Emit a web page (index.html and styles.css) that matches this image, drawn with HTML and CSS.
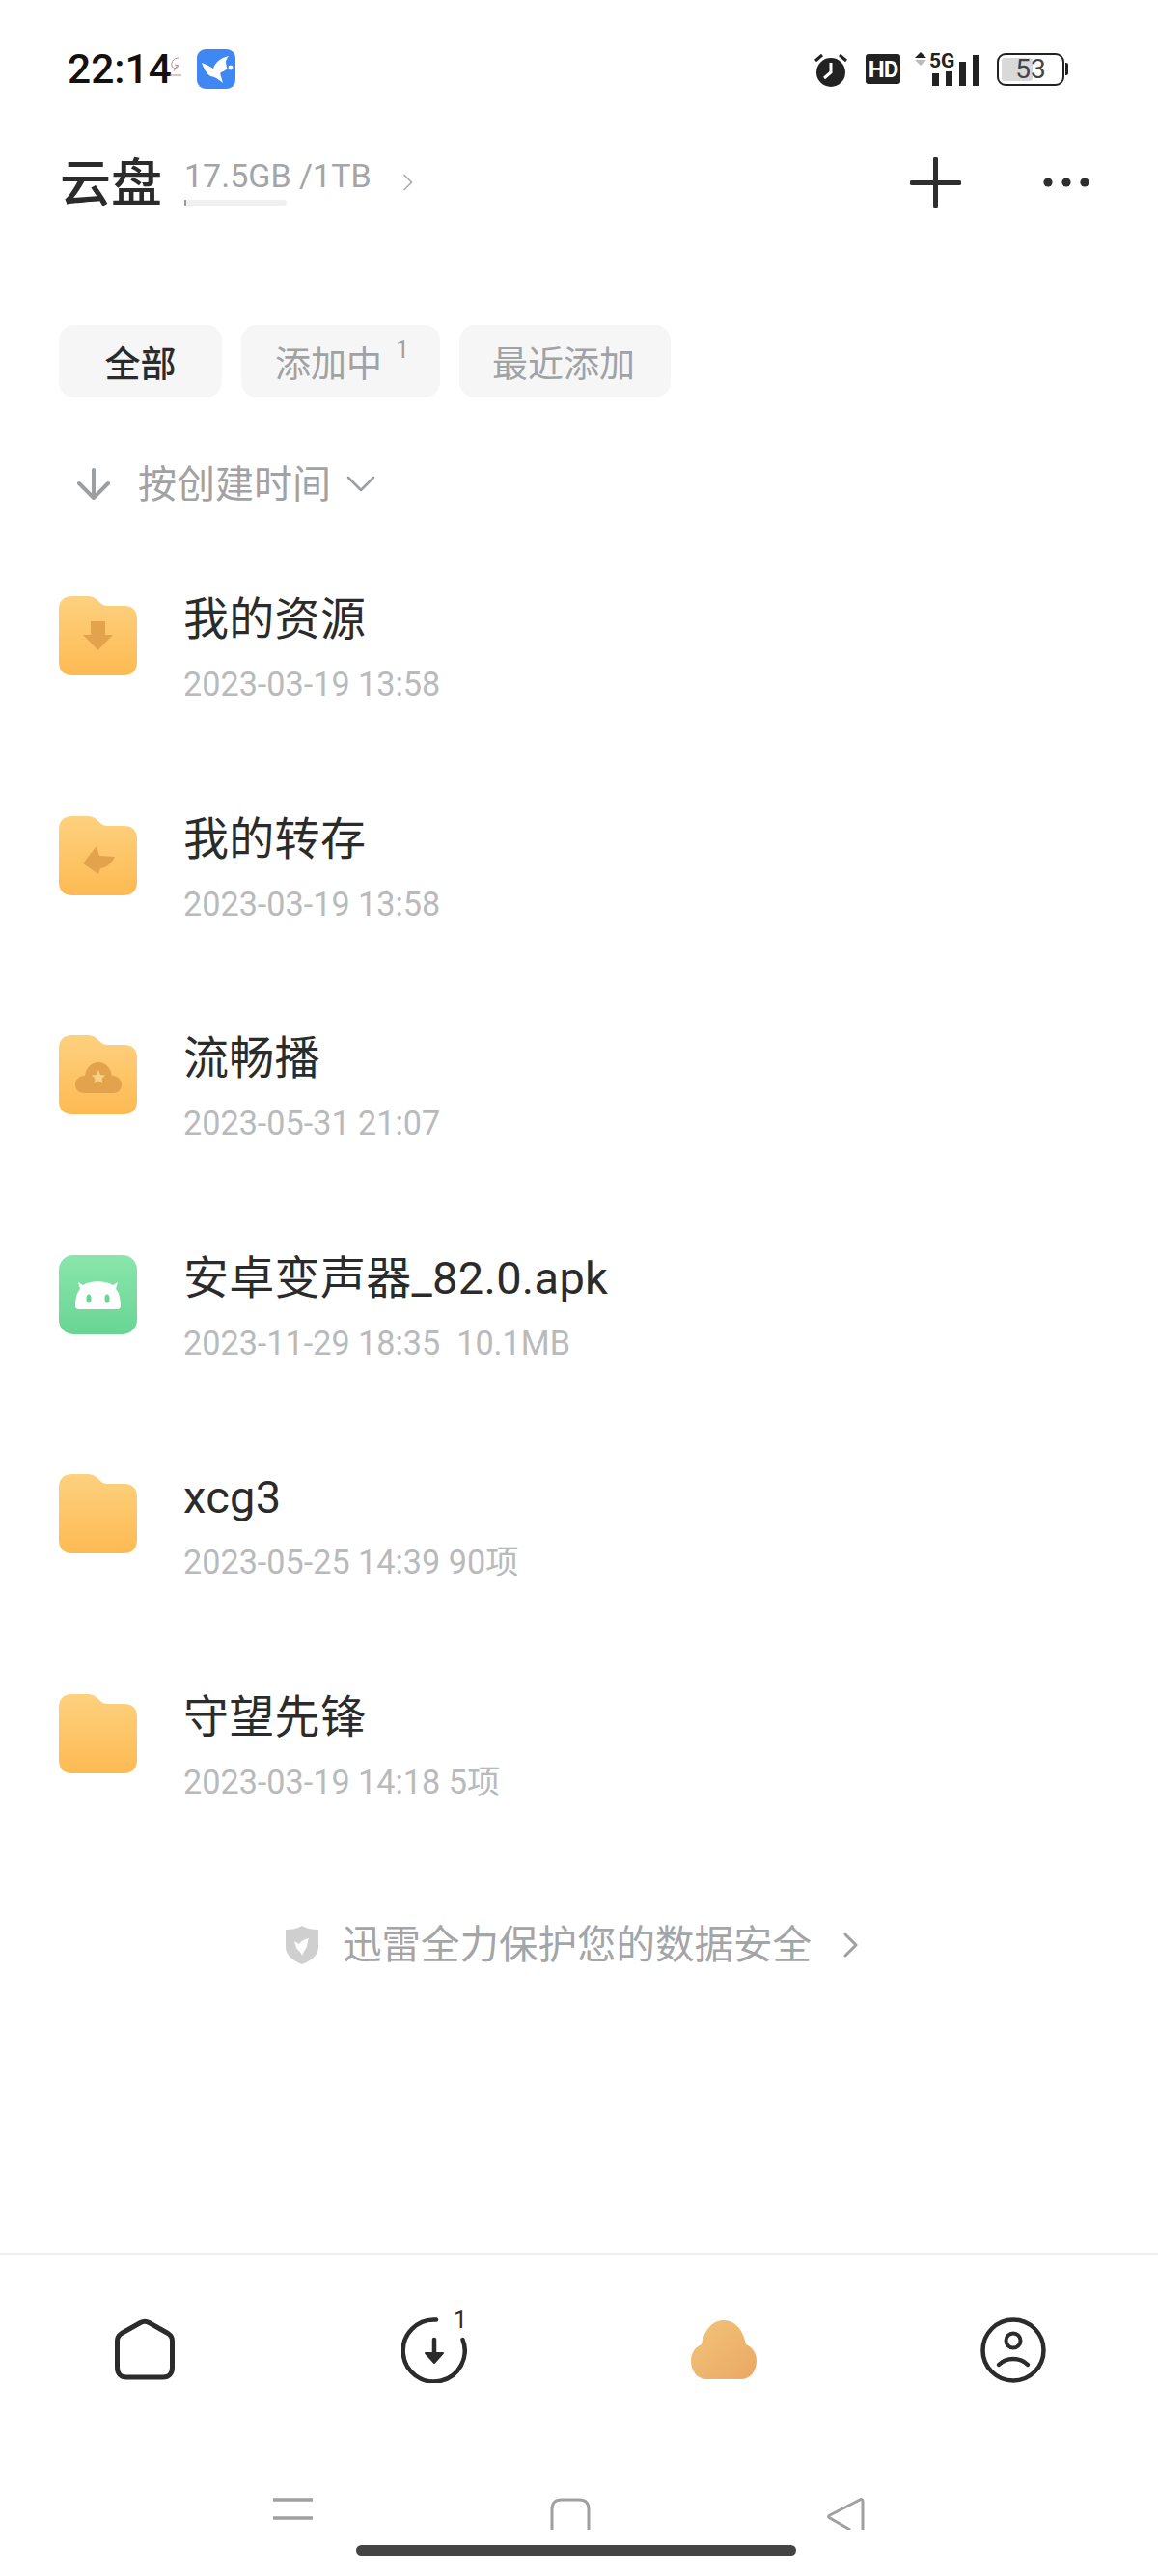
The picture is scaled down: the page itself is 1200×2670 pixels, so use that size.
FILE: index.html
```html
<!DOCTYPE html>
<html lang="zh">
<head>
<meta charset="utf-8">
<title>云盘</title>
<link rel="stylesheet" href="styles.css">
</head>
<body>
<svg class="defs" aria-hidden="true">
  <defs>
    <linearGradient id="fg" x1="0" y1="0" x2="0" y2="1"><stop offset="0" stop-color="#fdd17f"/><stop offset="1" stop-color="#fdba52"/></linearGradient>
    <linearGradient id="gg" x1="0" y1="0" x2="0" y2="1"><stop offset="0" stop-color="#8ae6ab"/><stop offset="1" stop-color="#68d593"/></linearGradient>
    <linearGradient id="cg" x1="0" y1="0" x2="1" y2="1"><stop offset="0" stop-color="#f2c479"/><stop offset="1" stop-color="#eaa864"/></linearGradient>
    <symbol id="folder" viewBox="0 0 81 82"><path fill="url(#fg)" d="M14 0H29C35 0 38 2 42 6C45 9 47 10 51 10H68C76 10 81 15 81 23V68C81 77 76 82 67 82H14C5 82 0 77 0 68V14C0 5 5 0 14 0Z"/></symbol>
  </defs>
</svg>
<main class="phone">
  <header class="status">
    <div class="status-left">
      <span class="time">22:14</span>
      <svg class="mini" viewBox="0 0 14 22"><path d="M10 2C5 2 2 6 3 10S9 13 10 10L6 9M9 9L5 16M1 20H13" fill="none" stroke="#b98a8f" stroke-width="1"/></svg>
      <svg class="bird" viewBox="0 0 40 41"><rect width="40" height="41" rx="9" fill="#3f87f2"/><path fill="#fff" d="M5 14C10 16 14 18 17 20C19 14 24 9 33 7C29 12 30 13 31 19C33 20 28 23 25 24C23 25 26 30 27 35C22 31 18 28 14 28C10 25 7 20 5 14Z"/><circle cx="35" cy="19" r="3" fill="#fff" stroke="#3f87f2"/></svg>
    </div>
    <div class="status-right">
      <svg class="alarm" viewBox="0 0 36 36"><circle cx="18" cy="21" r="15" fill="#222"/><path d="M2 9L9 3M34 9L27 3" stroke="#222" stroke-width="3" fill="none"/><path d="M18 11V21L11 27" stroke="#fff" stroke-width="3" fill="none"/></svg>
      <span class="hd">HD</span>
      <div class="net">
        <svg class="updown" viewBox="0 0 12 14"><path d="M6 0L12 6H0Z" fill="#222"/><path d="M6 14L12 8H0Z" fill="#bbb"/></svg>
        <div class="bars">
          <span class="bar b1"></span><span class="bar b2"></span><span class="bar b3"></span><span class="bar b4"></span>
        </div>
        <span class="net-label">5G</span>
      </div>
      <div class="battery"><div class="cell"><span class="fill"></span><span class="pct">53</span></div><span class="nub"></span></div>
    </div>
  </header>

  <section class="topbar">
    <h1 class="title">云盘</h1>
    <div class="storage">
      <span class="storage-text">17.5GB /1TB</span>
      <span class="progress"><span class="progress-on"></span></span>
    </div>
    <svg class="storage-chev" viewBox="0 0 11 18"><path d="M1.5 1L9.5 9L1.5 17" fill="none" stroke="#aaa" stroke-width="1.6"/></svg>
    <div class="actions">
      <svg class="plus" viewBox="0 0 53 53"><path d="M26.5 2V51M2 26.5H51" stroke="#2e2e2e" stroke-width="5" stroke-linecap="round"/></svg>
      <svg class="dots" viewBox="0 0 48 10"><circle cx="5" cy="5" r="4.6" fill="#2e2e2e"/><circle cx="24" cy="5" r="4.6" fill="#2e2e2e"/><circle cx="43" cy="5" r="4.6" fill="#2e2e2e"/></svg>
    </div>
  </section>

  <nav class="tabs">
    <span class="tab tab-active tab-all">全部</span>
    <span class="tab tab-adding">添加中<sup class="tab-count">1</sup></span>
    <span class="tab tab-recent">最近添加</span>
  </nav>

  <div class="sort">
    <svg class="sort-arrow" viewBox="0 0 36 33"><path d="M18 2V30M3 16L18 31L33 16" fill="none" stroke="#9b9fa1" stroke-width="4" stroke-linecap="round" stroke-linejoin="round"/></svg>
    <span class="sort-text">按创建时间</span>
    <svg class="sort-chev" viewBox="0 0 30 17"><path d="M2 2L15 15L28 2" fill="none" stroke="#9b9fa1" stroke-width="2.6" stroke-linecap="round" stroke-linejoin="round"/></svg>
  </div>

  <ul class="list">
    <li class="row">
      <svg class="file-icon" viewBox="0 0 81 82"><use href="#folder"/><path fill="#e3a34c" d="M33 26H48V40H56L40.500 56L25 40H33Z"/></svg>
      <div class="meta"><div class="name">我的资源</div><div class="date">2023-03-19 13:58</div></div>
    </li>
    <li class="row">
      <svg class="file-icon" viewBox="0 0 81 82"><use href="#folder"/><path fill="#e3a34c" d="M25 49L39 31L42 41L58 42C54 50 48 54 43 54L41 60Z"/></svg>
      <div class="meta"><div class="name">我的转存</div><div class="date">2023-03-19 13:58</div></div>
    </li>
    <li class="row">
      <svg class="file-icon" viewBox="0 0 81 82"><use href="#folder"/><path fill="#e3a34c" d="M26 60C20 60 17 56 17 51C17 46 21 42 27 42C28 34 34 28 41 28C48 28 54 34 55 42C61 42 65 46 65 51C65 56 62 60 56 60Z"/><path fill="#fbcf85" d="M41 36L43 41L48 41.500L44.500 45L45.500 50L41 47.500L36.500 50L37.500 45L34 41.500L39 41Z"/></svg>
      <div class="meta"><div class="name">流畅播</div><div class="date">2023-05-31 21:07</div></div>
    </li>
    <li class="row">
      <svg class="file-icon" viewBox="0 0 81 82"><rect width="81" height="82" rx="15" fill="url(#gg)"/><path fill="#fff" d="M20 28L25 31C33 26 48 26 56 31L61 28L59 35C63 39 64 47 64 53C64 55 62 56 60 56H21C19 56 17 55 17 53C17 47 18 39 22 35Z"/><ellipse cx="31" cy="45" rx="2.500" ry="4.500" fill="#68d593"/><ellipse cx="50" cy="45" rx="2.500" ry="4.500" fill="#68d593"/></svg>
      <div class="meta"><div class="name">安卓变声器_82.0.apk</div><div class="date">2023-11-29 18:35&nbsp; 10.1MB</div></div>
    </li>
    <li class="row">
      <svg class="file-icon" viewBox="0 0 81 82"><use href="#folder"/></svg>
      <div class="meta"><div class="name">xcg3</div><div class="date">2023-05-25 14:39 90项</div></div>
    </li>
    <li class="row">
      <svg class="file-icon" viewBox="0 0 81 82"><use href="#folder"/></svg>
      <div class="meta"><div class="name">守望先锋</div><div class="date">2023-03-19 14:18 5项</div></div>
    </li>
  </ul>

  <div class="protect">
    <svg class="shield" viewBox="0 0 34 40"><path fill="#cfcfcf" d="M17 0C22 3 28 4 34 4V22C34 31 25 37 17 40C9 37 0 31 0 22V4C6 4 12 3 17 0Z"/><path fill="#fff" d="M9 16L14 19C16 16 19 14 24 13C22 17 23 20 21 24C19 26 18 28 17 31C16 27 13 26 11 23Z"/></svg>
    <span class="protect-text">迅雷全力保护您的数据安全</span>
    <svg class="protect-chev" viewBox="0 0 15 26"><path d="M2 2L13 13L2 24" fill="none" stroke="#a0a0a0" stroke-width="3" stroke-linecap="round" stroke-linejoin="round"/></svg>
  </div>

  <footer class="tabbar">
    <div class="tabitem">
      <svg class="tabicon" viewBox="0 0 62 64"><path d="M26.500 4.500L7 15.500C4 17.500 2.500 19.500 2.500 23V51C2.500 57 6 61 12 61H50C56 61 59.500 57 59.500 51V23C59.500 19.500 58 17.500 55 15.500L35.500 4.500C32 2.500 30 2.500 26.500 4.500Z" fill="none" stroke="#2b2b2b" stroke-width="5"/></svg>
    </div>
    <div class="tabitem">
      <div class="download">
        <svg class="tabicon-round" viewBox="0 0 68 68"><path d="M36 2.600A32 32 0 1 0 63.500 23" fill="none" stroke="#2b2b2b" stroke-width="4.500" stroke-linecap="round"/><path d="M34 23V44" stroke="#2b2b2b" stroke-width="4.500" stroke-linecap="round"/><path d="M25 37L34 47L43 37Z" fill="#2b2b2b" stroke="#2b2b2b" stroke-width="2" stroke-linejoin="round"/></svg>
        <span class="badge">1</span>
      </div>
    </div>
    <div class="tabitem">
      <svg class="tabicon-cloud" viewBox="0 0 68 61"><path fill="url(#cg)" d="M34 0C46 0 54 10 57 25C64 28 68 34 68 42C68 53 61 61 52 61H16C7 61 0 53 0 42C0 34 4 28 11 25C14 10 22 0 34 0Z"/></svg>
    </div>
    <div class="tabitem">
      <svg class="tabicon-round" viewBox="0 0 68 68"><circle cx="34" cy="34" r="31.500" fill="none" stroke="#2b2b2b" stroke-width="4.500"/><circle cx="34" cy="24" r="7.500" fill="none" stroke="#2b2b2b" stroke-width="4"/><path d="M19 49C27 41 41 41 49 49" fill="none" stroke="#2b2b2b" stroke-width="4.500" stroke-linecap="round"/></svg>
    </div>
  </footer>

  <div class="sysnav">
    <svg class="sys-menu" viewBox="0 0 41 33"><path d="M0 2H41M0 21H41" stroke="#a0a0a0" stroke-width="3.500"/></svg>
    <svg class="sys-home" viewBox="0 0 42 33"><path d="M2 33V12C2 5 5 2 12 2H30C37 2 40 5 40 12V33" fill="none" stroke="#a0a0a0" stroke-width="3"/></svg>
    <svg class="sys-back" viewBox="0 0 39 33"><path d="M37 4C37 2 36 1 34 2L3 18C1 19 1 20 3 21L24 33M37 4V33" fill="none" stroke="#a0a0a0" stroke-width="3"/></svg>
  </div>
  <div class="pillrow"><span class="pill"></span></div>
</main>
</body>
</html>
```
FILE: styles.css
```css
* { box-sizing: border-box; }
html, body { margin: 0; padding: 0; background: #fff; }
body { width: 1200px; height: 2670px; overflow: hidden; font-family: Roboto, "Noto Sans CJK SC", sans-serif; color: #2b2b2b; }
.defs { display: block; width: 0; height: 0; }
.phone { display: flex; flex-direction: column; width: 1200px; height: 2670px; }

.status { display: flex; justify-content: space-between; align-items: center; height: 41px; margin-top: 51px; padding: 0 93px 0 70px; }
.status-left, .status-right { display: flex; align-items: center; }
.time { font-size: 42.5px; line-height: 41px; color: #111; font-weight: 500; }
.mini { width: 14px; height: 22px; margin: 0 0 6px -3px; }
.bird { width: 40px; height: 41px; margin-left: 15px; }
.alarm { width: 36px; height: 36px; }
.hd { display: flex; align-items: center; justify-content: center; width: 36px; height: 31px; margin-left: 18px; background: #222; color: #fff; font-size: 24px; font-weight: 700; letter-spacing: -1px; border-radius: 3px; }
.net { display: flex; justify-content: space-between; width: 67px; height: 36px; margin-left: 15px; position: relative; }
.updown { width: 12px; height: 14px; }
.bars { display: flex; align-items: flex-end; gap: 7px; height: 35px; }
.bar { width: 7px; background: #222; }
.b1 { height: 13px; }
.b2 { height: 15px; }
.b3 { height: 25px; }
.b4 { height: 32px; }
.net-label { position: absolute; left: 15px; top: 0; font-size: 21px; line-height: 18px; font-weight: 700; color: #222; background: #fff; }
.battery { display: flex; align-items: center; margin-left: 18px; }
.cell { display: flex; align-items: center; width: 70px; height: 34px; border: 2.5px solid #222; border-radius: 9px; padding: 3px; position: relative; }
.fill { display: block; width: 32px; height: 100%; background: #d9d9d9; border-radius: 3px; }
.pct { position: absolute; left: 0; right: 0; text-align: center; font-size: 28px; line-height: 29px; color: #444; }
.nub { display: block; width: 3px; height: 13px; background: #222; margin-left: 1px; border-radius: 0 2px 2px 0; }

.topbar { display: flex; align-items: center; height: 60px; margin-top: 67px; padding-left: 62px; }
.title { margin: 3px 0 0; font-size: 53px; line-height: 60px; font-weight: 500; color: #2b2b2b; width: 129px; }
.storage { display: flex; flex-direction: column; width: 193px; height: 56px; }
.storage-text { font-size: 34px; line-height: 38px; color: #a3a5a7; white-space: nowrap; margin-top: 2px; }
.progress { display: block; width: 106px; height: 6px; margin-top: 6px; background: #f0f0f0; border-radius: 3px; }
.progress-on { display: block; width: 2px; height: 6px; background: #999; }
.storage-chev { width: 11px; height: 18px; margin-left: 33px; }
.actions { display: flex; align-items: center; margin-left: 515px; }
.plus { width: 53px; height: 53px; }
.dots { width: 48px; height: 10px; margin-left: 85px; }

.tabs { display: flex; gap: 20px; height: 75px; margin-top: 118px; padding-left: 61px; }
.tab { display: flex; align-items: center; justify-content: center; height: 75px; background: #f6f6f7; border-radius: 16px; font-size: 37px; color: #a0a2a4; }
.tab-all { width: 169px; color: #2b2b2b; font-weight: 500; }
.tab-adding { width: 206px; justify-content: flex-start; padding-left: 35px; }
.tab-recent { width: 219px; padding-right: 3px; }
.tab-count { font-size: 25px; line-height: 1; margin: -24px 0 0 14px; vertical-align: baseline; }

.sort { display: flex; align-items: center; height: 60px; margin-top: 61px; padding-left: 79px; }
.sort-arrow { width: 36px; height: 33px; margin-top: -4px; }
.sort-text { font-size: 40px; line-height: 60px; color: #a0a2a4; margin-left: 28px; }
.sort-chev { width: 30px; height: 17px; margin: 0 0 4px 16px; }

.list { list-style: none; margin: 77px 0 0; padding: 0; }
.row { display: flex; align-items: flex-start; height: 227.5px; padding-left: 61px; }
.file-icon { width: 81px; height: 82px; flex: none; margin-top: 8px; }
.meta { margin-left: 48px; padding-top: 2px; }
.name { font-size: 47px; line-height: 60px; letter-spacing: 0.3px; color: #2b2b2b; white-space: nowrap; }
.date { font-size: 34.2px; line-height: 40px; color: #b9babb; white-space: nowrap; margin-top: 17px; }

.protect { display: flex; align-items: center; height: 50px; margin-top: 16px; padding-left: 296px; }
.shield { width: 34px; height: 40px; }
.protect-text { font-size: 40.5px; line-height: 50px; color: #a3a5a7; margin-left: 25px; white-space: nowrap; }
.protect-chev { width: 15px; height: 26px; margin-left: 33px; }

.tabbar { display: flex; height: 254px; margin-top: 294px; border-top: 2px solid #eeeeee; }
.tabitem { display: flex; justify-content: center; width: 300px; padding-top: 65px; }
.tabicon { width: 62px; height: 64px; margin-top: 1px; }
.tabicon-round { width: 68px; height: 68px; display: block; }
.tabicon-cloud { width: 68px; height: 61px; margin-top: 3px; }
.download { position: relative; width: 68px; height: 68px; }
.badge { position: absolute; left: 51px; top: -12px; font-size: 25px; line-height: 30px; color: #2b2b2b; background: #fff; padding: 0 3px; }

.sysnav { display: flex; height: 33px; padding-left: 283px; overflow: hidden; }
.sys-menu { width: 41px; height: 33px; }
.sys-home { width: 42px; height: 33px; margin-left: 246px; }
.sys-back { width: 39px; height: 33px; margin-left: 245px; }

.pillrow { display: flex; padding-left: 369px; margin-top: 16px; }
.pill { display: block; width: 456px; height: 11px; background: #444; border-radius: 6px; }
```
